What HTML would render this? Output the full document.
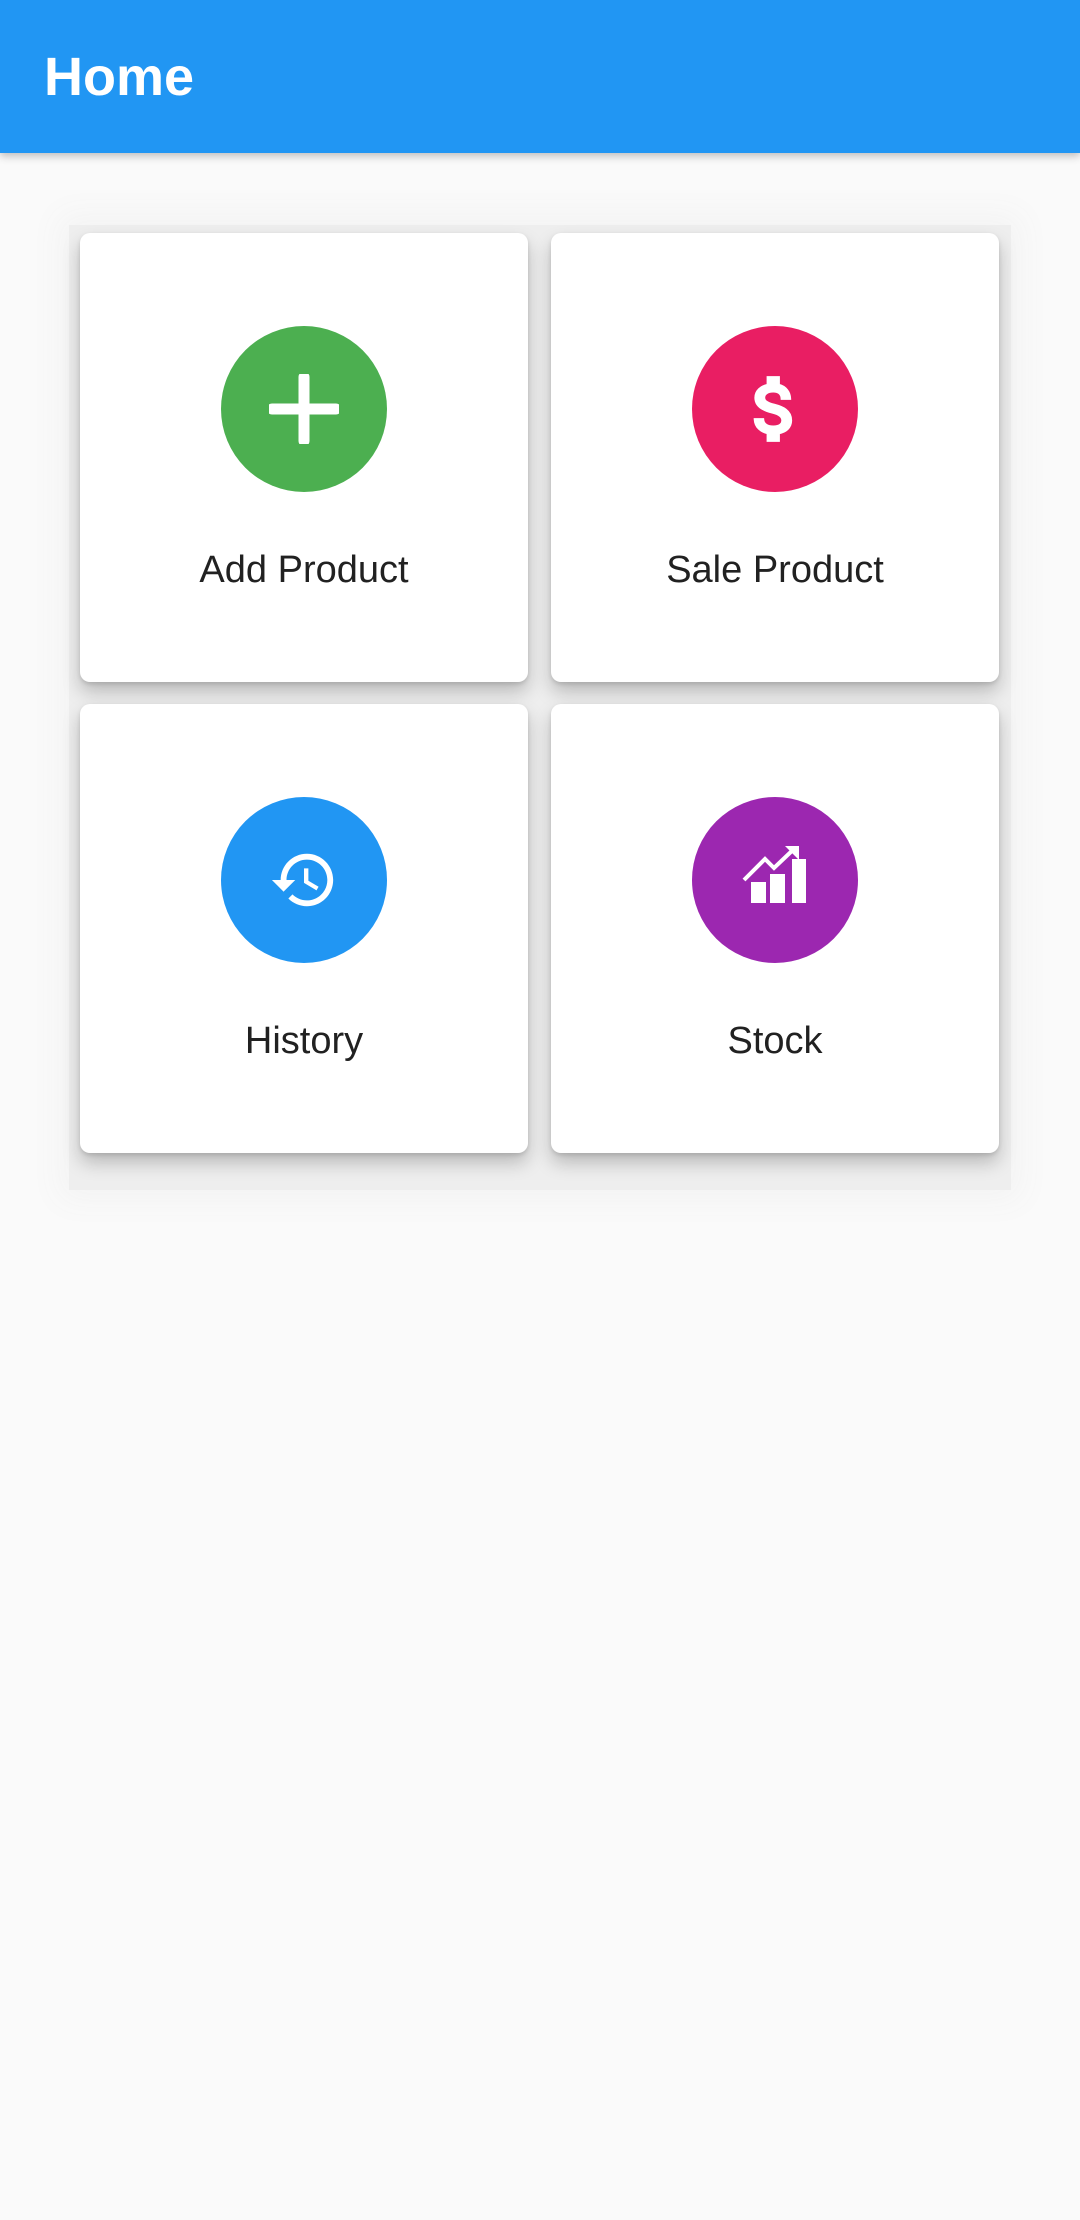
<!DOCTYPE html>
<html><head><meta charset="utf-8"><style>
html,body{margin:0;padding:0;}
body{width:1080px;height:2220px;background:#fafafa;position:relative;overflow:hidden;font-family:"Liberation Sans",Roboto,sans-serif;}
.bar{position:absolute;left:0;top:0;width:1080px;height:153px;background:#2196f3;box-shadow:0 3px 8px rgba(0,0,0,.25);z-index:2;}
.bar span{position:absolute;left:44px;top:47px;font-size:54px;color:#fff;font-weight:bold;line-height:60px;}
.back{position:absolute;left:69px;top:225px;width:942px;height:965px;background:#eeeeee;box-shadow:0 0 30px 10px #f3f3f3;}
.card{position:absolute;width:448px;height:449px;background:#fff;border-radius:10px;box-shadow:0 10px 18px rgba(0,0,0,.22),0 2px 4px rgba(0,0,0,.12);}
.circ{position:absolute;left:141px;top:93px;width:166px;height:166px;border-radius:50%;display:flex;align-items:center;justify-content:center;}
.lbl{position:absolute;left:0;width:448px;top:312px;text-align:center;font-size:38px;color:#212121;line-height:50px;}
</style></head><body>
<div class="bar"><span>Home</span></div>
<div class="back"></div>
<div class="card" style="left:80px;top:233px">
 <div class="circ" style="background:#4caf50"><svg width="70" height="70" viewBox="0 0 70 70"><path d="M35 3 V67 M3 35 H67" stroke="#fff" stroke-width="11" stroke-linecap="round"/></svg></div>
 <div class="lbl">Add Product</div></div>
<div class="card" style="left:551px;top:233px">
 <div class="circ" style="background:#e91e63"><svg width="84" height="84" viewBox="0 0 24 24"><path fill="#fff" stroke="#fff" stroke-width=".8" d="M11.8 10.9c-2.27-.59-3-1.2-3-2.15 0-1.09 1.01-1.850 2.7-1.85 1.780 0 2.44.85 2.5 2.1h2.21c-.07-1.72-1.12-3.3-3.21-3.81V3h-3v2.16c-1.94.42-3.5 1.68-3.5 3.61 0 2.31 1.910 3.46 4.7 4.130 2.5.6 3 1.48 3 2.41 0 .69-.49 1.79-2.7 1.79-2.06 0-2.87-.92-2.980-2.1h-2.2c.12 2.19 1.76 3.42 3.68 3.83V21h3v-2.15c1.95-.37 3.5-1.5 3.5-3.55 0-2.84-2.43-3.81-4.7-4.4z"/></svg></div>
 <div class="lbl">Sale Product</div></div>
<div class="card" style="left:80px;top:704px">
 <div class="circ" style="background:#2196f3"><svg width="70" height="70" viewBox="0 0 24 24"><path fill="#fff" d="M13 3c-4.97 0-9 4.03-9 9H1l3.89 3.89.07.14L9 12H6c0-3.87 3.13-7 7-7s7 3.130 7 7-3.13 7-7 7c-1.93 0-3.68-.79-4.94-2.06l-1.42 1.42C8.27 19.99 10.51 21 13 21c4.97 0 9-4.03 9-9s-4.03-9-9-9zm-1 5v5l4.28 2.540.72-1.21-3.5-2.08V8H12z"/></svg></div>
 <div class="lbl">History</div></div>
<div class="card" style="left:551px;top:704px">
 <div class="circ" style="background:#9c27b0"><svg width="70" height="70" viewBox="0 0 70 70"><g fill="#fff"><rect x="11" y="37" width="15" height="21"/><rect x="30" y="29" width="15" height="29"/><rect x="52" y="14" width="14" height="44"/></g><path d="M4 35 L25 14 L34 23 L55 3" stroke="#fff" stroke-width="4" fill="none"/><path d="M45 1 L59 1 L59 15 Z" fill="#fff"/></svg></div>
 <div class="lbl">Stock</div></div>
</body></html>
